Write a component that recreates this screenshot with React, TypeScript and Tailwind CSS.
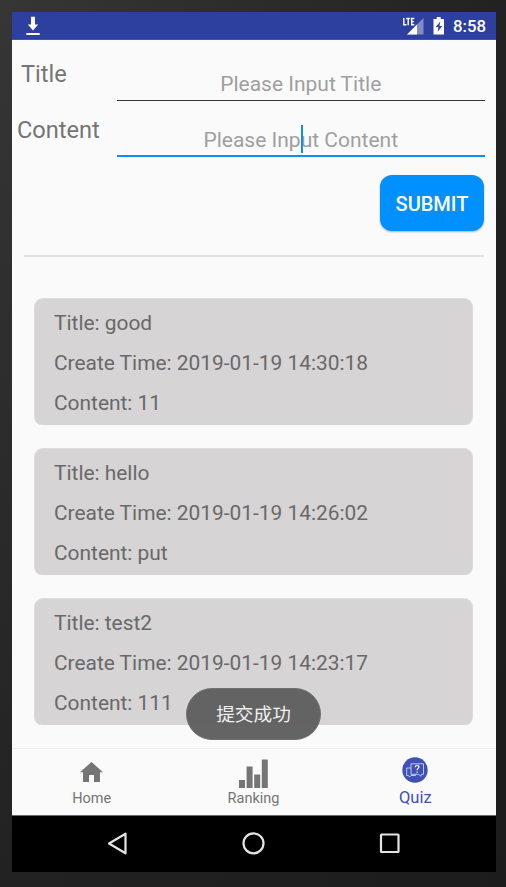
import React from "react";

const posts = [
  { title: "good", time: "2019-01-19 14:30:18", content: "11" },
  { title: "hello", time: "2019-01-19 14:26:02", content: "put" },
  { title: "test2", time: "2019-01-19 14:23:17", content: "111" },
];

function StatusBar() {
  return (
    <header className="flex h-7 shrink-0 items-center border-b border-[#4255ae] bg-[#2d3f9f] text-white">
      <svg className="ml-[14px] h-5 w-[14px]" viewBox="0 0 14 20" fill="currentColor">
        <path d="M5 .8h4v7.700h3.200L7 14.500 1.800 8.500H5z" />
        <path d="M.3 17h13.400v2H.3z" />
      </svg>
      <div className="grow" />
      <svg className="h-[18px] w-[21px]" viewBox="0 0 21 18" fill="currentColor">
        <path d="M20.500 1v16.500H4z" opacity=".4" />
        <path d="M14 7.500v10H4z" />
        <path d="M0 0h12v9H0z" fill="#2d3f9f" />
        <path d="M.8 1v6.700h2.700M3.200 1.500h4M5.200 1.500v6.800M11.300 1.500H8.700v6.200h2.600M8.700 4.600h2.200" fill="none" stroke="currentColor" strokeWidth="1.400" />
      </svg>
      <svg className="ml-[9px] h-[18px] w-[12px]" viewBox="0 0 12 18">
        <path d="M3.700 0h4v2H11v15.500H.5V2h3.200z" fill="#fff" />
        <path d="M7.300 4.500 2.800 10h2.700l-.9 4.700L9.300 9H6.500z" fill="#2d3f9f" />
      </svg>
      <span className="mr-[10px] ml-[8px] text-[16.800px] leading-7 font-medium">8:58</span>
    </header>
  );
}

function Form() {
  return (
    <form className="flex h-[218px] shrink-0 flex-col">
      <div className="flex h-[61px] items-start">
        <label className="w-[104.500px] pt-[19px] pl-[9px] text-[23.600px] leading-[30px]">Title</label>
        <div className="mr-[11px] h-full grow border-b-[1.500px] border-[#3a353a] pt-[30px] text-center text-[21px] leading-[28px] text-[#9f9f9f]">
          Please Input Title
        </div>
      </div>
      <div className="flex h-[56px] items-start">
        <label className="w-[104.500px] pt-[14px] pl-[5px] text-[23.600px] leading-[30px]">Content</label>
        <div className="relative mr-[11px] h-full grow border-b-2 border-[#0d8ff5] pt-[25px] text-center text-[21px] leading-[28px] text-[#9f9f9f]">
          Please Input Content
          <span className="absolute top-[24px] left-[184px] h-[28px] w-[2px] bg-[#0d8ff5]" />
        </div>
      </div>
      <button
        type="button"
        className="mt-[18px] mr-[12px] h-[56px] w-[104px] self-end rounded-[12px] bg-[#0190ff] pt-[2px] text-[20px] font-medium text-white shadow-[0_1px_2px_rgba(0,0,0,0.3)]"
      >
        SUBMIT
      </button>
      <div className="mt-[24px] mr-[12px] ml-[11.500px] h-[2px] shrink-0 bg-[#e0e0e0]" />
    </form>
  );
}

function Posts() {
  return (
    <main className="flex h-[490px] shrink-0 flex-col gap-[23px] pt-[40px] pr-[23px] pl-[22px]">
      {posts.map((p) => (
        <article
          key={p.time}
          className="h-[127px] shrink-0 rounded-t-[9px] rounded-b-[8px] border border-b-0 border-[#dedcdd] bg-[#d6d4d5] pt-[4px] pl-[19px] text-[20.900px] leading-[40px] text-[#696969]"
        >
          <p>Title: {p.title}</p>
          <p>Create Time: {p.time}</p>
          <p>Content: {p.content}</p>
        </article>
      ))}
    </main>
  );
}

function Tabs() {
  return (
    <nav className="grid h-[67px] shrink-0 grid-cols-3 border-t border-[#eeeeee] text-[14.500px] leading-[18px]">
      <div className="flex flex-col items-center pt-[13px] pr-[2px]">
        <svg className="h-5 w-[23px]" viewBox="0 0 22 20" preserveAspectRatio="none" fill="currentColor">
          <path d="M11 0 0 10.200h2.900V20h5.700v-7h4.800v7h5.700v-9.800H22z" />
        </svg>
        <span className="mt-[8px]">Home</span>
      </div>
      <div className="flex flex-col items-center pt-[9.500px]">
        <svg className="h-[29px] w-[29px]" viewBox="0 0 29 29" fill="currentColor">
          <path d="M0 21h6v8H0zM7.600 7.500h6V29h-6zM15.200 15.500h6V29h-6zM22.800.500h6V29h-6z" />
        </svg>
        <span className="mt-[2.500px] pr-[1px]">Ranking</span>
      </div>
      <div className="flex flex-col items-center pt-[8px] text-[#3f51b5]">
        <svg className="h-[26px] w-[26px]" viewBox="0 0 26 26">
          <circle cx="13" cy="13" r="12.700" fill="currentColor" />
          <g fill="none" stroke="#d0d5f2" strokeWidth=".9">
            <path d="M9 6.800h12.500v10.500h-2l-.8 2-2-2H9z" />
            <path d="M9 11H4.700v7.500h1.800l1 1.500 1.500-1.500h4.500v-1.200" />
          </g>
          <path d="M13.200 10.200c.2-2.400 4-2.100 3.700 0-.2 1.200-1.800 1.400-1.800 3M15.100 14.400v1.300" fill="none" stroke="#fff" strokeWidth="1.200" />
        </svg>
        <span className="mt-[6px] text-[16.500px]">Quiz</span>
      </div>
    </nav>
  );
}

function SystemBar() {
  return (
    <footer className="flex h-[57px] shrink-0 items-center border-t border-[#666b6b] bg-black">
      <svg className="h-full w-full" viewBox="0 0 484 56" fill="none" stroke="#e4e4e4" strokeWidth="2.200" strokeLinejoin="round">
        <path d="M97 27.500 113.500 17.700v19.600z" />
        <circle cx="241.500" cy="27.300" r="10" />
        <rect x="369" y="18.500" width="17.500" height="17.500" rx=".5" />
      </svg>
    </footer>
  );
}

export default function App() {
  return (
    <div className="h-[887px] w-[506px] overflow-hidden bg-linear-to-br from-[#363636] via-[#222222] to-[#1c1c1c] px-[12px] pt-[12px] pr-[10px] font-[Roboto,'Noto_Sans_CJK_SC',sans-serif]">
      <div className="relative flex h-[860px] w-[484px] flex-col bg-[#fafafa] text-[#757575]">
        <StatusBar />
        <Form />
        <Posts />
        <Tabs />
        <SystemBar />
        <div className="absolute top-[676px] left-[174px] flex h-[52px] w-[135px] items-center justify-center rounded-full border border-[#707070] bg-[#616161]/98 pt-[2px] text-[18.700px] text-[#f0f0f0]">
          提交成功
        </div>
      </div>
    </div>
  );
}
